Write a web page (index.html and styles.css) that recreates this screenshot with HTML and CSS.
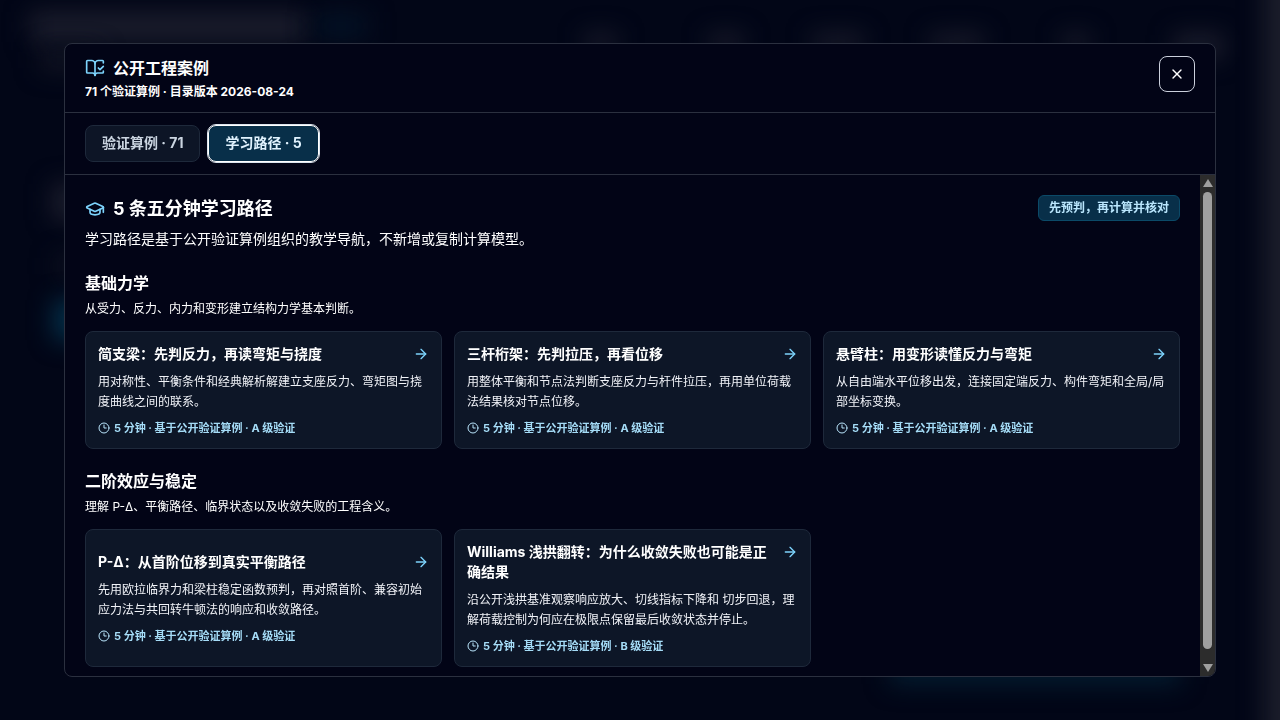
FILE: index.html
```html
<!DOCTYPE html>
<html lang="zh-CN">
<head>
<meta charset="utf-8">
<meta name="viewport" content="width=device-width, initial-scale=1">
<title>公开工程案例</title>
<link rel="stylesheet" href="styles.css">
</head>
<body>
<svg class="sprite" aria-hidden="true">
  <symbol id="arrow" viewBox="0 0 24 24"><path d="M5 12h14"/><path d="m12 5 7 7-7 7"/></symbol>
  <symbol id="clock" viewBox="0 0 24 24"><circle cx="12" cy="12" r="10"/><path d="M12 6v6h4.5"/></symbol>
</svg>
<div class="scene" aria-hidden="true">
  <span class="glow glow-brand"></span>
  <span class="glow glow-tagline"></span>
  <span class="glow glow-accent"></span>
  <span class="glow glow-nav nav-a"></span>
  <span class="glow glow-nav nav-b"></span>
  <span class="glow glow-nav nav-c"></span>
  <span class="glow glow-nav nav-d"></span>
  <span class="glow glow-nav nav-e"></span>
  <span class="glow glow-nav nav-f"></span>
  <span class="glow glow-title"></span>
  <span class="glow glow-text"></span>
  <span class="glow glow-button"></span>
  <span class="glow glow-panel"></span>
  <span class="glow glow-edge"></span>
</div>
<div class="overlay">
  <section class="dialog" role="dialog" aria-modal="true" aria-labelledby="dialog-title">
    <header class="dialog-header">
      <div>
        <h1 class="dialog-title" id="dialog-title">
          <svg class="icon icon-lg" viewBox="0 0 24 24" aria-hidden="true"><path d="M12 21V7"/><path d="m16 12 2 2 4-4"/><path d="M22 6V4a1 1 0 0 0-1-1h-5a4 4 0 0 0-4 4 4 4 0 0 0-4-4H3a1 1 0 0 0-1 1v13a1 1 0 0 0 1 1h6a3 3 0 0 1 3 3 3 3 0 0 1 3-3h6a1 1 0 0 0 1-1v-1.3"/></svg>
          公开工程案例
        </h1>
        <p class="dialog-sub">71 个验证算例 · 目录版本 2026-08-24</p>
      </div>
      <button class="close" type="button" aria-label="关闭">
        <svg class="icon icon-md" viewBox="0 0 24 24" aria-hidden="true"><path d="M18 6 6 18"/><path d="m6 6 12 12"/></svg>
      </button>
    </header>
    <div class="tabs" role="tablist">
      <button class="tab" type="button" role="tab" aria-selected="false">验证算例 · 71</button>
      <button class="tab tab-active" type="button" role="tab" aria-selected="true">学习路径 · 5</button>
    </div>
    <div class="body">
      <div class="scroll">
        <div class="intro">
          <div>
            <h2 class="intro-title">
              <svg class="icon icon-lg" viewBox="0 0 24 24" aria-hidden="true"><path d="M21.42 10.922a1 1 0 0 0-.019-1.838L12.83 5.18a2 2 0 0 0-1.66 0L2.6 9.08a1 1 0 0 0 0 1.832l8.57 3.908a2 2 0 0 0 1.66 0z"/><path d="M22 10v6"/><path d="M6 12.5V16a6 3 0 0 0 12 0v-3.5"/></svg>
              5 条五分钟学习路径
            </h2>
            <p class="intro-text">学习路径是基于公开验证算例组织的教学导航，不新增或复制计算模型。</p>
          </div>
          <span class="badge">先预判，再计算并核对</span>
        </div>
        <section class="group">
          <h3 class="group-title">基础力学</h3>
          <p class="group-text">从受力、反力、内力和变形建立结构力学基本判断。</p>
          <div class="cards">
            <button class="card" type="button">
              <span class="card-head"><span class="card-title">简支梁：先判反力，再读弯矩与挠度</span><svg class="icon icon-md" aria-hidden="true"><use href="#arrow"/></svg></span>
              <span class="card-text">用对称性、平衡条件和经典解析解建立支座反力、弯矩图与挠度曲线之间的联系。</span>
              <span class="card-meta"><svg class="icon icon-sm" aria-hidden="true"><use href="#clock"/></svg>5 分钟 · 基于公开验证算例 · A 级验证</span>
            </button>
            <button class="card" type="button">
              <span class="card-head"><span class="card-title">三杆桁架：先判拉压，再看位移</span><svg class="icon icon-md" aria-hidden="true"><use href="#arrow"/></svg></span>
              <span class="card-text">用整体平衡和节点法判断支座反力与杆件拉压，再用单位荷载法结果核对节点位移。</span>
              <span class="card-meta"><svg class="icon icon-sm" aria-hidden="true"><use href="#clock"/></svg>5 分钟 · 基于公开验证算例 · A 级验证</span>
            </button>
            <button class="card" type="button">
              <span class="card-head"><span class="card-title">悬臂柱：用变形读懂反力与弯矩</span><svg class="icon icon-md" aria-hidden="true"><use href="#arrow"/></svg></span>
              <span class="card-text">从自由端水平位移出发，连接固定端反力、构件弯矩和全局/局部坐标变换。</span>
              <span class="card-meta"><svg class="icon icon-sm" aria-hidden="true"><use href="#clock"/></svg>5 分钟 · 基于公开验证算例 · A 级验证</span>
            </button>
          </div>
        </section>
        <section class="group">
          <h3 class="group-title">二阶效应与稳定</h3>
          <p class="group-text">理解 P-Δ、平衡路径、临界状态以及收敛失败的工程含义。</p>
          <div class="cards">
            <button class="card" type="button">
              <span class="card-head"><span class="card-title">P-Δ：从首阶位移到真实平衡路径</span><svg class="icon icon-md" aria-hidden="true"><use href="#arrow"/></svg></span>
              <span class="card-text">先用欧拉临界力和梁柱稳定函数预判，再对照首阶、兼容初始应力法与共回转牛顿法的响应和收敛路径。</span>
              <span class="card-meta"><svg class="icon icon-sm" aria-hidden="true"><use href="#clock"/></svg>5 分钟 · 基于公开验证算例 · A 级验证</span>
            </button>
            <button class="card" type="button">
              <span class="card-head"><span class="card-title">Williams 浅拱翻转：为什么收敛失败也可能是正确结果</span><svg class="icon icon-md" aria-hidden="true"><use href="#arrow"/></svg></span>
              <span class="card-text">沿公开浅拱基准观察响应放大、切线指标下降和 切步回退，理解荷载控制为何应在极限点保留最后收敛状态并停止。</span>
              <span class="card-meta"><svg class="icon icon-sm" aria-hidden="true"><use href="#clock"/></svg>5 分钟 · 基于公开验证算例 · B 级验证</span>
            </button>
          </div>
        </section>
      </div>
      <div class="scrollbar" aria-hidden="true">
        <svg class="scroll-arrow" viewBox="0 0 10 8"><path d="M5 0 10 8H0z"/></svg>
        <div class="thumb"></div>
        <svg class="scroll-arrow" viewBox="0 0 10 8"><path d="M5 8 0 0h10z"/></svg>
      </div>
    </div>
  </section>
</div>
</body>
</html>
```
FILE: styles.css
```css
* {
  box-sizing: border-box;
}

body {
  margin: 0;
  height: 100vh;
  overflow: hidden;
  background: #020617;
  color: #fff;
  font-family: Inter, "Noto Sans CJK SC", sans-serif;
}

h1, h2, h3, p {
  margin: 0;
}

button {
  font-family: inherit;
  cursor: pointer;
}

.sprite {
  position: absolute;
  width: 0;
  height: 0;
}

/* Blurred page behind the dialog */
.scene {
  position: fixed;
  inset: 0;
  overflow: hidden;
}

.glow {
  position: absolute;
  filter: blur(12px);
}

.glow-brand { left: 30px; top: 12px; width: 276px; height: 30px; background: #1b1d2c; }
.glow-tagline { left: 40px; top: 50px; width: 60px; height: 20px; background: #121523; }
.glow-accent { left: 314px; top: 12px; width: 54px; height: 28px; background: #031124; }
.glow-nav { top: 34px; height: 16px; background: #1b1d2c; }
.nav-a { left: 584px; width: 34px; }
.nav-b { left: 708px; width: 36px; }
.nav-c { left: 812px; width: 52px; }
.nav-d { left: 930px; width: 54px; }
.nav-e { left: 1062px; width: 28px; }
.nav-f { left: 1174px; width: 50px; height: 24px; }
.glow-title { left: 52px; top: 184px; width: 60px; height: 36px; background: #1b1d2c; }
.glow-text { left: 56px; top: 256px; width: 60px; height: 20px; background: #0e1220; }
.glow-button { left: 54px; top: 300px; width: 60px; height: 40px; background: #03304a; }
.glow-panel { left: 890px; top: 656px; width: 290px; height: 28px; background: #031d30; }
.glow-edge { left: 1264px; top: -30px; width: 60px; height: 800px; background: #1c1e2b; }

.overlay {
  position: fixed;
  inset: 0;
  display: flex;
  padding: 6vh 5vw;
}

.dialog {
  flex: 1;
  min-width: 0;
  display: flex;
  flex-direction: column;
  overflow: hidden;
  border: 1px solid #2b303f;
  border-radius: 8px;
  background: #020416;
}

.icon {
  flex: none;
  fill: none;
  stroke: #7dd3fc;
  stroke-width: 2;
  stroke-linecap: round;
  stroke-linejoin: round;
}

.icon-lg { width: 20px; height: 20px; }
.icon-md { width: 16px; height: 16px; }
.icon-sm { width: 12px; height: 12px; }

.dialog-header {
  display: flex;
  align-items: flex-start;
  justify-content: space-between;
  padding: 12px 20px;
  border-bottom: 1px solid #2b303f;
}

.dialog-title {
  display: flex;
  align-items: center;
  gap: 8px;
  font-size: 16px;
  line-height: 24px;
  font-weight: 700;
}

.dialog-sub {
  margin-top: 4px;
  font-size: 12px;
  line-height: 16px;
  font-weight: 700;
}

.close {
  display: flex;
  align-items: center;
  justify-content: center;
  width: 36px;
  height: 36px;
  padding: 0;
  border: 1px solid #cbd0dc;
  border-radius: 8px;
  background: transparent;
}

.close .icon {
  stroke: #fff;
}

.tabs {
  display: flex;
  gap: 8px;
  padding: 12px 20px;
  border-bottom: 1px solid #2b303f;
}

.tab {
  height: 37px;
  padding: 0 16px 1px;
  border: 1px solid #1e293b;
  border-radius: 8px;
  background: #0d1526;
  color: #cbd5e1;
  font-size: 14px;
  line-height: 20px;
  font-weight: 700;
}

.tab-active {
  border-color: #fff;
  outline: 1px solid #dbe4ee;
  background: #082f49;
  color: #e0f2fe;
}

.body {
  flex: 1;
  min-height: 0;
  display: flex;
}

.scroll {
  flex: 1;
  min-width: 0;
  overflow-y: auto;
  scrollbar-width: none;
  padding: 20px;
}

.intro {
  display: flex;
  align-items: flex-start;
  justify-content: space-between;
  gap: 12px;
}

.intro-title {
  display: flex;
  align-items: center;
  gap: 8px;
  font-size: 18px;
  line-height: 28px;
  font-weight: 700;
}

.intro-text {
  margin-top: 4px;
  font-size: 14px;
  line-height: 24px;
}

.badge {
  flex: none;
  padding: 4px 10px;
  border: 1px solid #0b4a68;
  border-radius: 6px;
  background: #082f49;
  color: #bae6fd;
  font-size: 12px;
  line-height: 16px;
  font-weight: 700;
}

.group {
  margin-top: 20px;
}

.group-title {
  font-size: 16px;
  line-height: 24px;
  font-weight: 700;
}

.group-text {
  margin-top: 4px;
  font-size: 12px;
  line-height: 20px;
}

.cards {
  display: grid;
  grid-template-columns: repeat(3, minmax(0, 1fr));
  gap: 12px;
  margin-top: 12px;
}

.card {
  display: flex;
  flex-direction: column;
  justify-content: center;
  gap: 8px;
  padding: 12px;
  border: 1px solid #1e293b;
  border-radius: 8px;
  background: #0d1627;
  color: #fff;
  text-align: left;
}

.card-head {
  display: flex;
  align-items: flex-start;
  justify-content: space-between;
  gap: 12px;
}

.card-head .icon {
  margin-top: 2px;
}

.card-title {
  font-size: 14px;
  line-height: 20px;
  font-weight: 700;
}

.card-text {
  color: #f1f3f8;
  font-size: 12px;
  line-height: 20px;
}

.card-meta {
  display: flex;
  align-items: center;
  gap: 4px;
  color: #a5dcf7;
  font-size: 11px;
  line-height: 16px;
  font-weight: 700;
}

.card-meta .icon {
  stroke: #bae6fd;
}

.scrollbar {
  flex: none;
  display: flex;
  flex-direction: column;
  align-items: center;
  gap: 5px;
  width: 15px;
  padding: 4px 0;
  background: #2c2c2c;
}

.scroll-arrow {
  width: 10px;
  height: 8px;
  fill: #9f9f9f;
}

.thumb {
  flex: 1;
  width: 9px;
  margin-bottom: 10px;
  border-radius: 5px;
  background: #9f9f9f;
}
```
